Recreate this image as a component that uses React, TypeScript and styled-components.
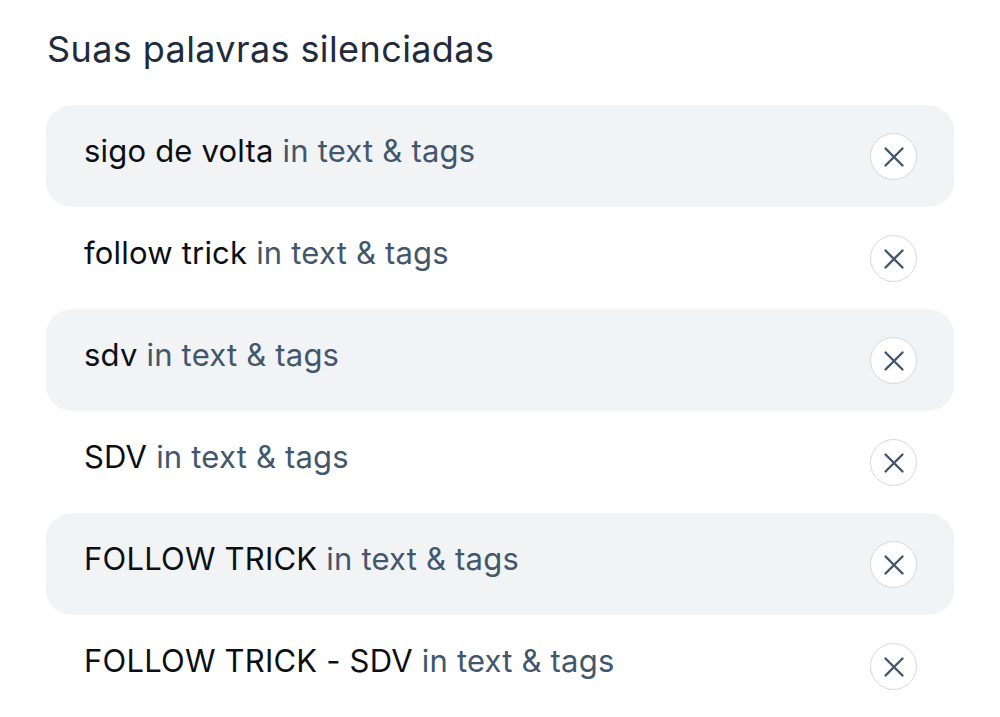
import React from 'react';
import styled, { createGlobalStyle } from 'styled-components';

const GlobalStyle = createGlobalStyle`
    body {
        margin: 0;
        background: #ffffff;
        font-family: Inter, "Noto Sans", sans-serif;
    }
`;

type mutedword = {
    word: string;
    scope: string;
};

const words: mutedword[] = [
    { word: 'sigo de volta', scope: 'in text & tags' },
    { word: 'follow trick', scope: 'in text & tags' },
    { word: 'sdv', scope: 'in text & tags' },
    { word: 'SDV', scope: 'in text & tags' },
    { word: 'FOLLOW TRICK', scope: 'in text & tags' },
    { word: 'FOLLOW TRICK - SDV', scope: 'in text & tags' },
];

const CloseIcon = () => (
    <svg width="26" height="26" viewBox="0 0 26 26" fill="none">
        <path
            d="M4.5 4.5L21.5 21.5M21.5 4.5L4.5 21.5"
            stroke="#42576c"
            strokeWidth="2.4"
            strokeLinecap="round"
        />
    </svg>
);

export default function App() {
    return (
        <Page>
            <GlobalStyle />
            <Title>Suas palavras silenciadas</Title>
            <WordList>
                {words.map((w, i) => (
                    <WordRow key={i} shaded={i % 2 === 0}>
                        <WordText>
                            {w.word} <Scope>{w.scope}</Scope>
                        </WordText>
                        <RemoveButton aria-label="remove">
                            <CloseIcon />
                        </RemoveButton>
                    </WordRow>
                ))}
            </WordList>
        </Page>
    );
}

const Page = styled.div`
    padding: 26px 46px 0 46px;
`;

const Title = styled.h2`
    margin: 0 0 33px 1px;
    font-size: 36px;
    font-weight: 400;
    letter-spacing: 0.4px;
    color: #1f2c3b;
    line-height: 46px;
`;

const WordList = styled.div`
    display: flex;
    flex-direction: column;
`;

const WordRow = styled.div<{ shaded: boolean }>`
    height: 102px;
    display: flex;
    align-items: center;
    justify-content: space-between;
    padding: 0 37px 0 38px;
    border-radius: 26px;
    background: ${(p) => (p.shaded ? '#f1f3f5' : 'transparent')};
`;

const WordText = styled.div`
    font-size: 31px;
    letter-spacing: 0.2px;
    color: #0b0f14;
    margin-top: -12px;
`;

const Scope = styled.span`
    color: #42576c;
`;

const RemoveButton = styled.button`
    width: 47px;
    height: 47px;
    border-radius: 50%;
    border: 1px solid #d4d9de;
    background: #ffffff;
    display: flex;
    align-items: center;
    justify-content: center;
    padding: 0;
    margin-top: 1px;
`;
